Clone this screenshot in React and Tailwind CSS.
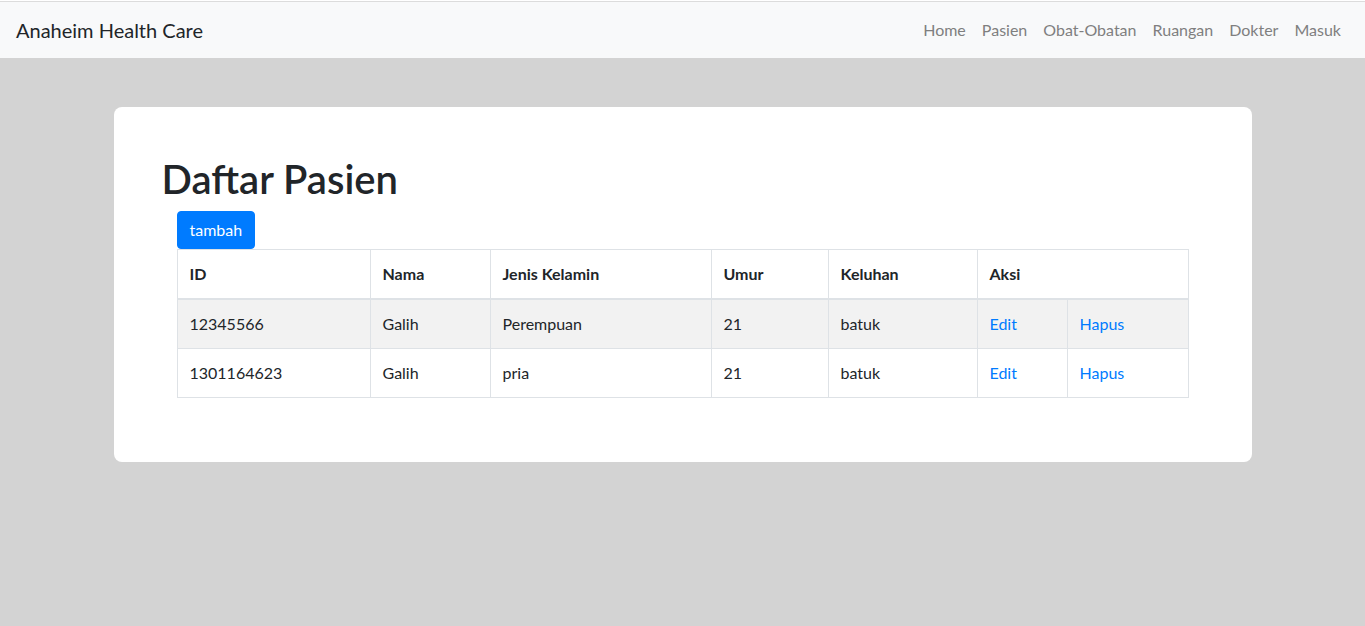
const navLinks = ["Home", "Pasien", "Obat-Obatan", "Ruangan", "Dokter", "Masuk"];

const pasien = [
  { id: "12345566", nama: "Galih", jk: "Perempuan", umur: "21", keluhan: "batuk" },
  { id: "1301164623", nama: "Galih", jk: "pria", umur: "21", keluhan: "batuk" },
];

export default function App() {
  return (
    <div
      className="min-h-[626px] bg-[#d3d3d3] text-[#212529]"
      style={{ fontFamily: "Lato, 'Open Sans', sans-serif" }}
    >
      <div className="h-px bg-white" />
      <nav className="flex h-[57px] items-center justify-between border-t border-[#dcdcdc] bg-[#f8f9fa] px-4">
        <a className="text-[20px] leading-[30px] text-[#212529]">Anaheim Health Care</a>
        <ul className="flex">
          {navLinks.map((l) => (
            <li key={l}>
              <a className="block px-2 py-2 text-[16px] leading-6 text-[#7f7f7f]">{l}</a>
            </li>
          ))}
        </ul>
      </nav>

      <div className="mx-auto mt-[49px] w-[1138px] rounded-lg bg-white px-12 py-12">
        <h1 className="mb-2 text-[40px] font-semibold leading-[48px]">Daftar Pasien</h1>
        <div className="px-[15px]">
          <button className="rounded border border-[#007bff] bg-[#007bff] px-3 py-1.5 text-[16px] leading-6 text-white">
            tambah
          </button>
          <table className="mb-4 w-full table-fixed border-collapse border border-[#dee2e6] text-[16px] leading-6">
            <colgroup>
              <col className="w-[193px]" />
              <col className="w-[120px]" />
              <col className="w-[221px]" />
              <col className="w-[117px]" />
              <col className="w-[149px]" />
              <col className="w-[90px]" />
              <col />
            </colgroup>
            <thead>
              <tr>
                {["ID", "Nama", "Jenis Kelamin", "Umur", "Keluhan"].map((h) => (
                  <th key={h} className="border border-b-2 border-[#dee2e6] p-3 text-left font-bold">
                    {h}
                  </th>
                ))}
                <th colSpan={2} className="border border-b-2 border-[#dee2e6] p-3 text-left font-bold">
                  Aksi
                </th>
              </tr>
            </thead>
            <tbody>
              {pasien.map((p, i) => (
                <tr key={p.id} className={i % 2 === 0 ? "bg-[#f2f2f2]" : ""}>
                  <td className="border border-[#dee2e6] p-3">{p.id}</td>
                  <td className="border border-[#dee2e6] p-3">{p.nama}</td>
                  <td className="border border-[#dee2e6] p-3">{p.jk}</td>
                  <td className="border border-[#dee2e6] p-3">{p.umur}</td>
                  <td className="border border-[#dee2e6] p-3">{p.keluhan}</td>
                  <td className="border border-[#dee2e6] p-3">
                    <a className="text-[#007bff]">Edit</a>
                  </td>
                  <td className="border border-[#dee2e6] p-3">
                    <a className="text-[#007bff]">Hapus</a>
                  </td>
                </tr>
              ))}
            </tbody>
          </table>
        </div>
      </div>
    </div>
  );
}
